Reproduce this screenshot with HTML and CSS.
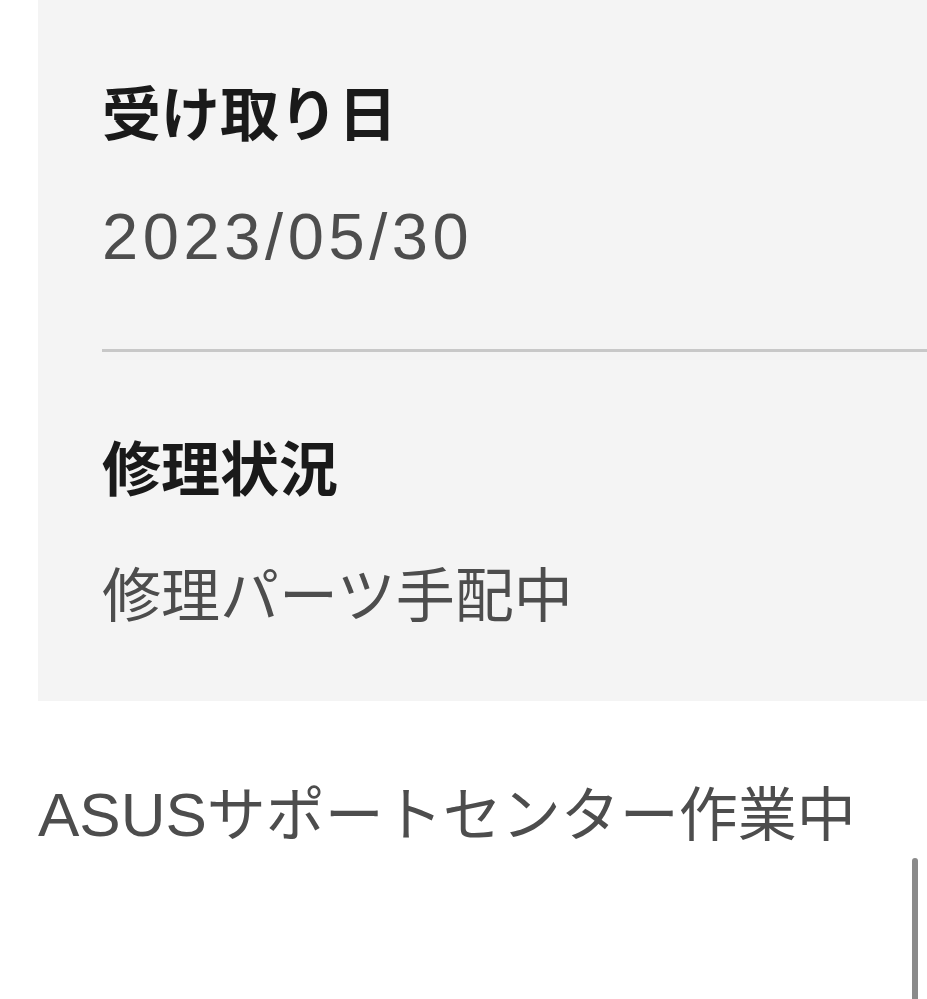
FILE: index.html
```html
<!DOCTYPE html>
<html lang="ja">
<head>
<meta charset="utf-8">
<link rel="stylesheet" href="styles.css">
</head>
<body>
<div class="page">
  <section class="panel">
    <div class="item">
      <h2 class="label">受け取り日</h2>
      <p class="value date">2023/05/30</p>
    </div>
    <hr class="divider">
    <div class="item item-last">
      <h2 class="label">修理状況</h2>
      <p class="value">修理パーツ手配中</p>
    </div>
  </section>
  <p class="status"><span class="latin">ASUS</span>サポートセンター作業中</p>
</div>
<div class="scrollbar"></div>
</body>
</html>
```
FILE: styles.css
```css
html, body {
  margin: 0;
  padding: 0;
  background: #ffffff;
}
body {
  font-family: "Liberation Sans", "Noto Sans CJK JP", sans-serif;
  width: 927px;
  height: 999px;
  overflow: hidden;
  position: relative;
}
.page {
  display: flex;
  flex-direction: column;
}
.panel {
  margin-left: 38px;
  background: #f4f4f4;
  padding: 67px 0 66px 64px;
  display: flex;
  flex-direction: column;
}
.item {
  display: flex;
  flex-direction: column;
  gap: 39px;
  padding-right: 64px;
}
.label {
  margin: 0;
  font-family: "Noto Sans CJK JP", sans-serif;
  font-size: 59px;
  line-height: 87px;
  font-weight: 700;
  color: #1a1a1a;
}
.value {
  margin: 0;
  font-family: "Noto Sans CJK JP", sans-serif;
  font-size: 59px;
  line-height: 87px;
  font-weight: 400;
  color: #4d4d4d;
}
.date {
  font-family: "Liberation Sans", sans-serif;
  font-size: 65px;
  letter-spacing: 4.6px;
}
.divider {
  margin: 69px 0 70px 0;
  border: 0;
  height: 3px;
  background: #c8c8c8;
}
.status {
  margin: 70px 0 0 38px;
  font-size: 59px;
  line-height: 87px;
  color: #4d4d4d;
}
.latin {
  font-family: "Liberation Sans", sans-serif;
  font-size: 62px;
}
.scrollbar {
  position: absolute;
  left: 912px;
  top: 858px;
  width: 6px;
  height: 160px;
  border-radius: 3px;
  background: #8a8a8a;
}
```
